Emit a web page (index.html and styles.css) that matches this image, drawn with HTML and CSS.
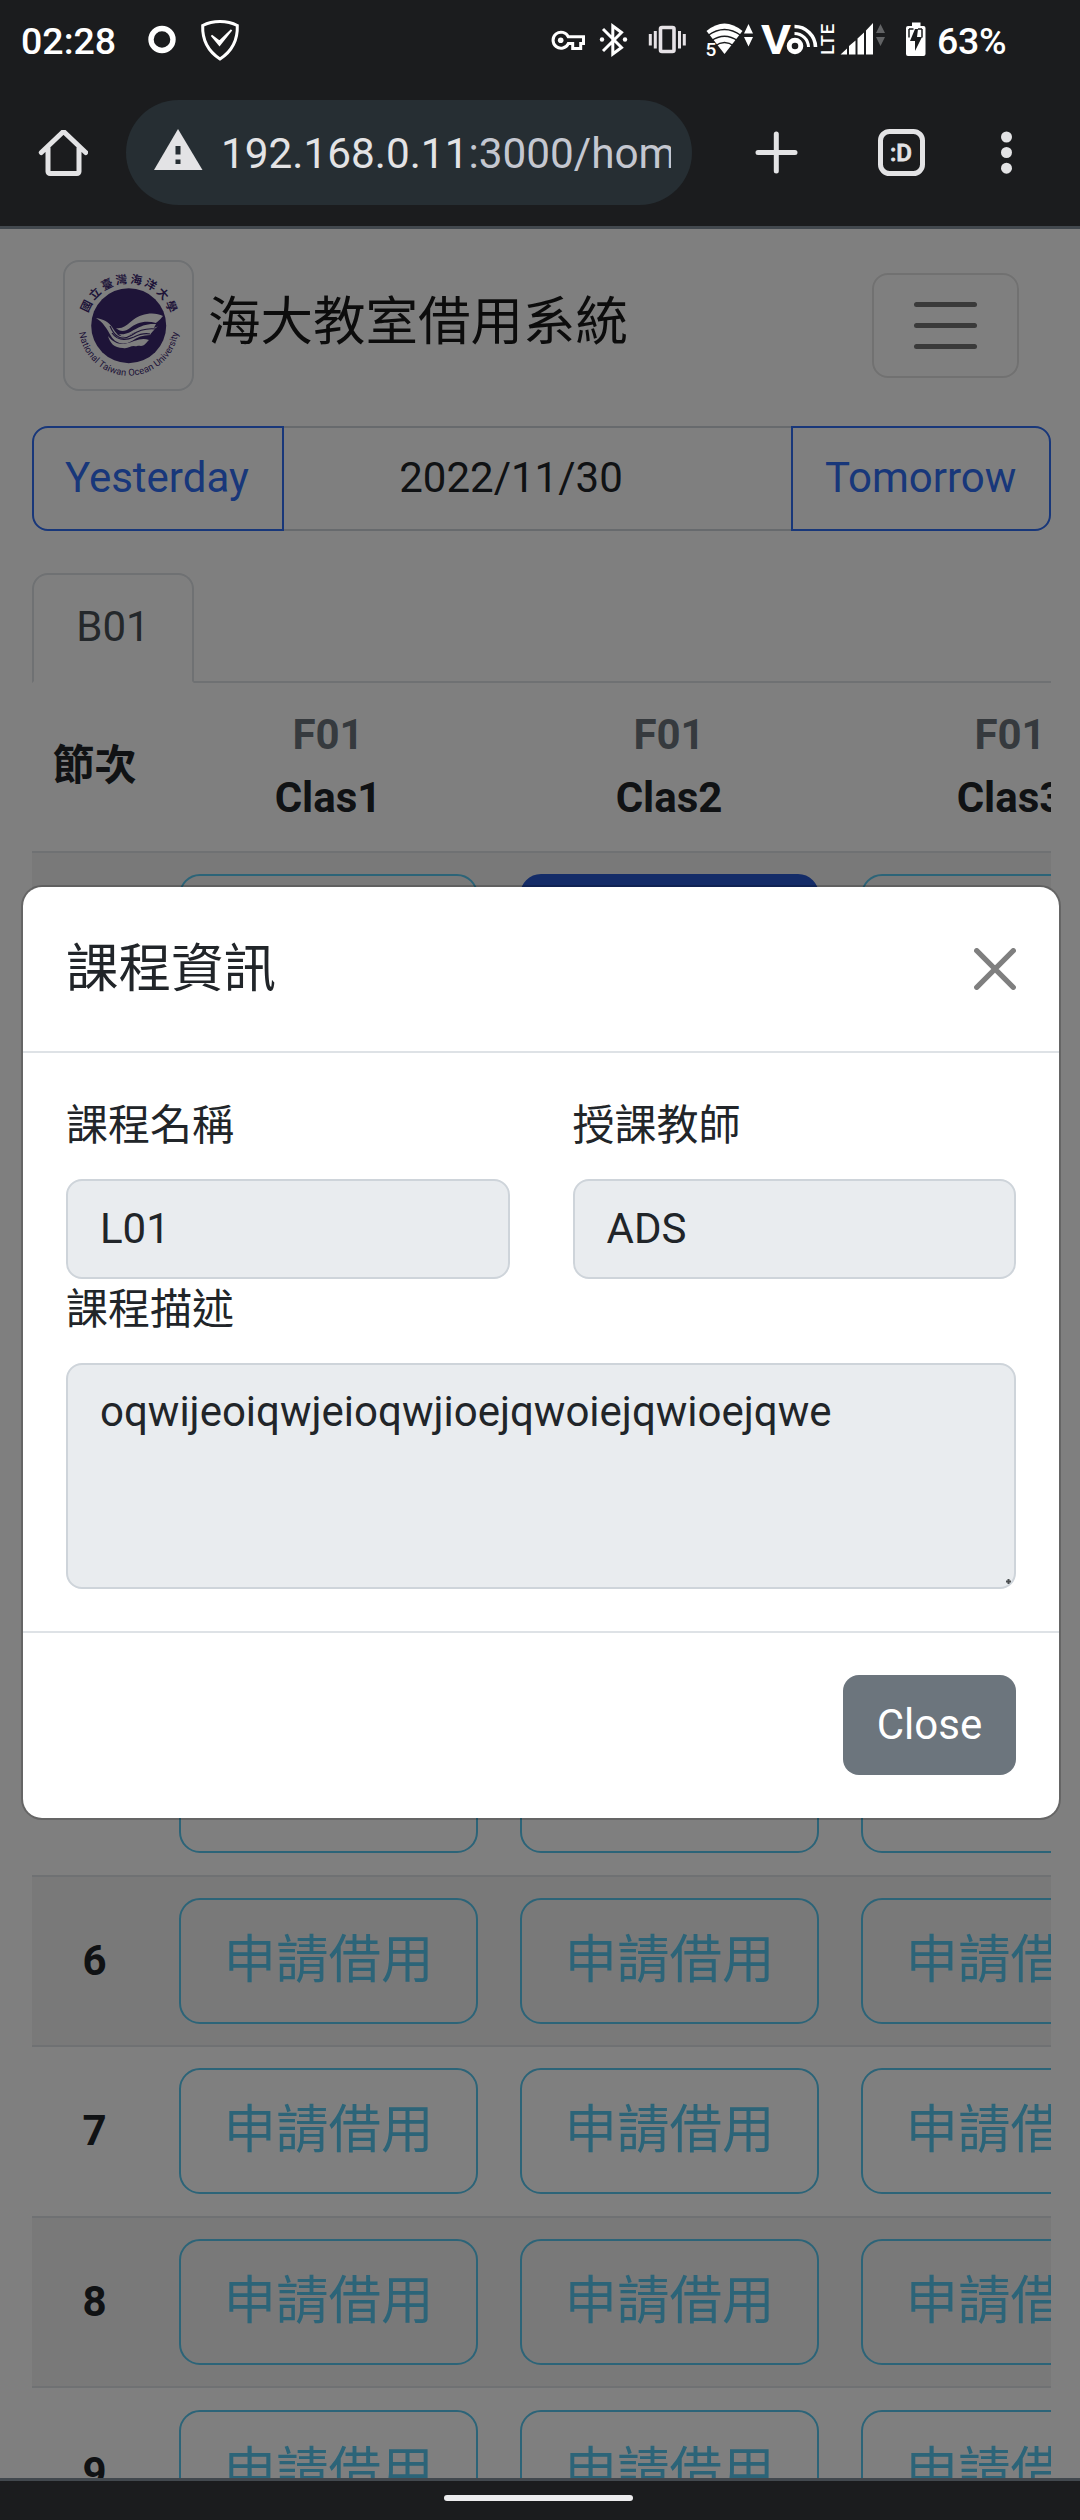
FILE: index.html
```html
<!DOCTYPE html>
<html lang="zh-Hant">
<head>
<meta charset="utf-8">
<title>海大教室借用系統</title>
<link rel="stylesheet" href="styles.css">
</head>
<body>
<div class="phone">
  <header class="chrome">
    <div class="status">
      <span class="clock">02:28</span>
      <svg class="status-left" width="100" height="60" viewBox="140 10 100 60" fill="none" stroke="#fff">
        <circle cx="162" cy="39.5" r="11" stroke-width="5.4"/>
        <path d="M220 21.5c6.500 0 12 1.200 17.300 4 0.500 14-5 25.500-17.300 33.500-12.300-8-17.800-19.500-17.300-33.500 5.300-2.800 10.800-4 17.300-4z" stroke-width="3"/>
        <path d="M211.500 35.500l8 9.500 12-15-12 11.500z" fill="#fff" stroke-width="1.800"/>
      </svg>
      <svg class="status-right" width="350" height="50" viewBox="545 15 350 50" fill="#fff">
        <g fill="none" stroke="#fff" stroke-width="3">
          <path d="M568.300 36.800h15.200v6.800h-2.800v5h-8v-5h-4.400a8 8 0 1 1 0-6.800z"/>
          <path d="M603 29l18.500 18.500-8.700 6.500v-28l8.700 6.500-18.500 18.500"/>
        </g>
        <circle cx="560.700" cy="40.200" r="2.800"/>
        <circle cx="602" cy="39.500" r="2.200"/><circle cx="625" cy="39.500" r="2.200"/>
        <rect x="660.500" y="27.500" width="13.500" height="24" rx="1.500" fill="none" stroke="#e6e2e6" stroke-width="3.600"/>
        <path d="M650.300 34v11.500M655.300 31v17.500M679.500 31v17.500M684.300 34v11.500" stroke="#e6e2e6" stroke-width="3"/>
        <path d="M706.500 31q18-15 36 0L724.500 54z"/>
        <g fill="none" stroke="#1b1c1e" stroke-width="1.500">
          <path d="M708 35.500q16.500-12 33 0M711 41q13.500-9.500 27 0M715 46q9.500-7 19 0"/>
        </g>
        <path d="M704 41h10l4 8v9h-14z" fill="#1b1c1e"/>
        <text x="705.500" y="55.500" font-size="19">5</text>
        <path d="M744 33.500l4.500-9.500 4.500 9.500zM744 37l4.500 9.500 4.500-9.500z"/>
        <text class="heavy" x="761" y="53.500" font-size="41" textLength="30" lengthAdjust="spacingAndGlyphs">V</text>
        <g fill="none" stroke="#fff">
          <circle cx="795" cy="46" r="5.800" stroke-width="5"/>
          <path d="M794.500 26.500a21 21 0 0 1 21 20.500" stroke-width="3.600"/>
          <path d="M794.500 33.500a14 14 0 0 1 14 13.500" stroke-width="3"/>
        </g>
        <text class="mid" transform="translate(833.500 54.800) rotate(-90)" font-size="18.500" textLength="31">LTE</text>
        <path d="M840.500 54.500l6.500-6v6zM849 54.500v-8.500l6.500-5.500v14zM857.500 54.500v-16l6.500-6v22zM866 54.500v-24l7-7.500v31.500z"/>
        <path d="M876 33l4.500-9 4.500 9zM876 37l4.500 9 4.500-9z" fill="#626365"/>
      </svg>
      <svg class="battery" width="24" height="50" viewBox="904 15 24 50">
        <path d="M912 22.500h8.500v3.500h3a2 2 0 0 1 2 2v26a2 2 0 0 1-2 2h-15.500a2 2 0 0 1-2-2V28a2 2 0 0 1 2-2h4z" fill="#fff"/>
        <path d="M909 29v8.500M922 29v8.500M909 29h4.500M918 29h4" stroke="#1b1c1e" stroke-width="1.500"/>
        <path d="M915 29l-5 12h5v10l7-14h-5l1-8z" fill="#1b1c1e"/>
      </svg>
      <span class="percent">63%</span>
    </div>
    <div class="toolbar">
      <svg class="home" width="50" height="52" viewBox="38 130 50 52" fill="none" stroke="#e3e3e5" stroke-width="5" stroke-linejoin="round" stroke-linecap="round">
        <path d="M41.300 152.500L63.500 131.500 85.700 152.500M48 148v23.500a2 2 0 0 0 2 2h27a2 2 0 0 0 2-2V148"/>
      </svg>
      <div class="omnibox">
        <svg class="warn" width="50" height="44" viewBox="153 128 50 44">
          <path d="M178 129l24.500 41h-48.500z" fill="#e3e3e5"/>
          <path d="M178 146v8.500M178 159.500v4.500" stroke="#262e33" stroke-width="5"/>
        </svg>
        <span class="url">192.168.0.11<span class="path">:3000/home</span></span>
      </div>
      <svg class="tools" width="270" height="60" viewBox="750 122 270 60" fill="none" stroke="#e3e3e5" stroke-linecap="round">
        <path d="M758 152.500h37M776.300 134v37" stroke-width="5"/>
        <rect x="880.500" y="131.500" width="42" height="42" rx="9" stroke-width="5"/>
        <text class="mid" x="890" y="161" font-size="24.500" fill="#e3e3e5" stroke="#e3e3e5" stroke-width=".8" textLength="22" lengthAdjust="spacingAndGlyphs">:D</text>
        <g fill="#e3e3e5" stroke="none"><circle cx="1006.500" cy="137" r="5.500"/><circle cx="1006.500" cy="152.500" r="5.500"/><circle cx="1006.500" cy="168.200" r="5.500"/></g>
      </svg>
    </div>
  </header>

  <main class="page">
    <nav class="navbar">
      <div class="logo">
        <svg width="127" height="127" viewBox="65 262 127 127">
          <defs>
            <path id="arc-top" d="M86.200 325.700a42.500 42.500 0 0 1 85 0"/>
            <path id="arc-bottom" d="M78.700 325.700a50 50 0 0 0 100 0"/>
          </defs>
          <circle cx="128.700" cy="325.700" r="37.500" fill="#3c2870"/>
          <text class="seal-cjk" font-size="11.500" letter-spacing="2.300" text-anchor="middle"><textPath href="#arc-top" startOffset="51%">國立臺灣海洋大學</textPath></text>
          <text class="seal-en" font-size="9.400" text-anchor="middle"><textPath href="#arc-bottom" startOffset="50%" textLength="143">National Taiwan Ocean University</textPath></text>
          <path fill="#fff" d="M96 318c7 1 13 4 16 9 2 3 4 6 6 8 9 5 17-5 27-6 5-1 9 0 13-3-4 4-7 7-8 9-7 0-13 2-18 6-9 5-17 2-21-5-4-7-8-14-15-18z"/>
          <path fill="#fff" d="M116 328c12 2 15-12 31-14 6-1 12 0 16 2-3 4-5 5-7 7-11-3-20 0-26 5-5 4-10 4-14 0z"/>
          <path fill="#fff" d="M119 334c13 2 17-11 37-10-3 5-4 8-7 9-10-4-16 0-21 3-4 2-7 0-9-2z"/>
          <path fill="#fff" d="M108 336c8 10 16 9 26 5 6-2 10-3 15-1-3 3-5 6-8 6-4-1-4 1-7 0-4 0-6 3-11 2-9 0-13-5-15-12z"/>
          <path fill="none" stroke="#3c2870" stroke-width="1.200" d="M110 326c5 12 12 15 22 9 7-5 15-7 24-6M112 333c5 7 13 8 22 4 6-3 11-4 16-3"/>
        </svg>
      </div>
      <span class="brand">海大教室借用系統</span>
      <div class="toggler"><i></i><i></i><i></i></div>
    </nav>

    <div class="date-group">
      <div class="btn-date first">Yesterday</div>
      <div class="date-field">2022/11/30</div>
      <div class="btn-date last">Tomorrow</div>
    </div>

    <div class="tabs"><div class="tab">B01</div></div>

    <div class="table">
      <div class="row head">
        <div class="cell">節次</div>
        <div class="cell"><span class="floor">F01</span><span>Clas1</span></div>
        <div class="cell"><span class="floor">F01</span><span>Clas2</span></div>
        <div class="cell"><span class="floor">F01</span><span>Clas3</span></div>
      </div>
      <div class="row"><div class="cell"></div><div class="book"></div><div class="book taken"></div><div class="book"></div></div>
      <div class="row"><div class="cell"></div><div class="book"></div><div class="book"></div><div class="book"></div></div>
      <div class="row"><div class="cell"></div><div class="book"></div><div class="book"></div><div class="book"></div></div>
      <div class="row"><div class="cell"></div><div class="book"></div><div class="book"></div><div class="book"></div></div>
      <div class="row"><div class="cell"></div><div class="book"></div><div class="book"></div><div class="book"></div></div>
      <div class="row"><div class="cell"></div><div class="book"></div><div class="book"></div><div class="book"></div></div>
      <div class="row"><div class="cell">6</div><div class="book">申請借用</div><div class="book">申請借用</div><div class="book">申請借用</div></div>
      <div class="row"><div class="cell">7</div><div class="book">申請借用</div><div class="book">申請借用</div><div class="book">申請借用</div></div>
      <div class="row"><div class="cell">8</div><div class="book">申請借用</div><div class="book">申請借用</div><div class="book">申請借用</div></div>
      <div class="row"><div class="cell">9</div><div class="book">申請借用</div><div class="book">申請借用</div><div class="book">申請借用</div></div>
    </div>

    <div class="backdrop">
      <section class="modal">
        <div class="modal-header">
          <h5>課程資訊</h5>
          <svg width="42" height="42" viewBox="0 0 42 42" stroke="#7f7f7f" stroke-width="5.200" stroke-linecap="round"><path d="M2.700 2.700l36.600 36.600M39.300 2.700L2.700 39.300"/></svg>
        </div>
        <div class="modal-body">
          <div class="fields">
            <div class="field"><label>課程名稱</label><div class="control">L01</div></div>
            <div class="field"><label>授課教師</label><div class="control">ADS</div></div>
          </div>
          <div class="field">
            <label>課程描述</label>
            <div class="control area">oqwijeoiqwjeioqwjioejqwoiejqwioejqwe<svg class="grip" width="5" height="5" viewBox="0 0 5 5"><path d="M0 1.500h1.500V0h2v1.500H5v2H3.500V5h-2V3.500H0z" fill="#4b4e51"/></svg></div>
          </div>
        </div>
        <div class="modal-footer"><div class="btn-close">Close</div></div>
      </section>
    </div>
  </main>

  <footer class="gesture"><i></i></footer>
</div>
</body>
</html>
```
FILE: styles.css
```css
* { box-sizing: border-box; }
body { margin: 0; font-family: Roboto, "Noto Sans CJK TC", sans-serif; font-size: 42px; color: #212529; }
svg { display: block; flex: none; }
svg text { font-family: Roboto, "Noto Sans CJK TC", sans-serif; }
.heavy { font-weight: 700; }
.mid { font-weight: 500; }

.phone { width: 1080px; height: 2520px; display: flex; flex-direction: column; overflow: hidden; background: #1b1c1e; }

/* Browser chrome */
.chrome { height: 229px; flex: none; border-bottom: 3px solid #42484e; }
.status { height: 80px; display: flex; align-items: flex-start; color: #fff; font-weight: 500; font-size: 37.500px; line-height: 45px; }
.clock { padding: 19px 0 0 21px; width: 140px; }
.status-left { margin-top: 10px; }
.status-right { margin: 15px 0 0 305px; }
.battery { margin: 15px 0 0 9px; }
.percent { padding: 19px 0 0 9px; letter-spacing: -.3px; }
.toolbar { display: flex; align-items: flex-start; padding-top: 20px; height: 125px; }
.home { margin: 30px 0 0 38px; }
.omnibox { display: flex; align-items: center; margin-left: 38px; width: 566px; height: 105px; border-radius: 53px; background: #262e33; padding-left: 27px; }
.warn { margin-top: -6px; }
.url { flex: none; width: 450px; margin: 3px 0 0 18px; overflow: hidden; white-space: nowrap; color: #e3e3e5; font-size: 42.300px; line-height: 60px; }
.path { color: #c4c7d0; }
.tools { margin: 22px 0 0 58px; }

/* Page */
.page { position: relative; flex: 1; overflow: hidden; background: #fff; padding: 31px 29px 0 32px; }
.navbar { display: flex; align-items: center; height: 131px; padding: 0 32px 0 31px; }
.logo { width: 131px; height: 131px; border: 2px solid #dee2e6; border-radius: 16px; }
.seal-cjk { fill: #3c2870; font-weight: 700; }
.seal-en { fill: #3c2870; }
.brand { font-size: 52.500px; line-height: 78px; margin: -8px auto 0 14px; color: #191919; white-space: nowrap; }
.toggler { width: 147px; height: 105px; border: 2px solid #e3e3e3; border-radius: 16px; display: flex; flex-direction: column; justify-content: center; align-items: center; gap: 16px; }
.toggler i { width: 63px; height: 5px; border-radius: 3px; background: #747474; }

.date-group { display: flex; height: 105px; margin-top: 35px; line-height: 63px; }
.btn-date { border: 2px solid #306ef4; color: #306ef4; padding: 18px 32px; }
.first { border-radius: 16px 0 0 16px; width: 252px; padding-left: 31px; }
.last { border-radius: 0 16px 16px 0; width: 260px; }
.date-field { flex: 1; border: solid #ced4da; border-width: 2px 0; padding: 18px 53px 18px 0; text-align: center; }

.tabs { margin-top: 42px; height: 110px; border-bottom: 2px solid #dee2e6; }
.tab { width: 162px; height: 110px; border: 2px solid #dee2e6; border-bottom-color: #fff; border-radius: 16px 16px 0 0; text-align: center; line-height: 103px; color: #495057; }

.table { overflow: hidden; }
.row { display: grid; grid-template-columns: 126px repeat(3, 341px); height: 170.600px; border-top: 2px solid #dee2e6; }
.row:nth-child(even) { background: #f2f2f2; }
.cell { display: flex; flex-direction: column; align-items: center; justify-content: center; font-weight: 700; line-height: 63px; padding: 0 1px 1px 0; }
.head { height: 168px; border-top: 0; }
.head .cell { padding-bottom: 4px; }
.head .cell + .cell { padding: 0 1px 2px 0; }
.floor { color: #6c757d; }
.book { width: 299px; height: 126px; margin: 21.300px 21px; border: 2px solid #58c8f0; border-radius: 21px; color: #58c8f0; font-size: 52.500px; line-height: 121px; text-align: center; }
.taken { background: #2858d0; border-color: #2858d0; color: #fff; }

/* Dialog, layered over the dimmed page */
.backdrop { position: absolute; inset: 0; background: rgba(0, 0, 0, .5); display: flex; justify-content: center; padding: 656px 19px 0 21px; }
.modal { width: 1040px; height: 935px; background: #fff; background-clip: padding-box; border: 2px solid rgba(0, 0, 0, .2); border-radius: 21px; display: flex; flex-direction: column; }
.modal-header { height: 166px; display: flex; justify-content: space-between; align-items: center; padding: 0 43px; border-bottom: 2px solid #dee2e6; }
h5 { margin: 0; font-weight: 400; font-size: 52.500px; line-height: 78px; }
.modal-body { flex: 1; padding: 42px 43px 0; }
.fields { display: grid; grid-template-columns: 1fr 1fr; gap: 63px; }
label { display: block; line-height: 61px; height: 84px; }
.control { height: 100px; border: 2px solid #ced4da; border-radius: 16px; background: #e9ecef; padding: 16px 32px; line-height: 63px; }
.area { position: relative; height: 226px; padding-top: 15px; }
.grip { position: absolute; right: 3px; bottom: 3px; }
.modal-footer { height: 187px; border-top: 2px solid #dee2e6; padding: 42px 43px; display: flex; justify-content: flex-end; }
.btn-close { width: 173px; height: 100px; border-radius: 16px; background: #6c757d; color: #fff; text-align: center; line-height: 100px; }

.gesture { height: 42px; flex: none; border-top: 3px solid #42484e; display: flex; justify-content: center; padding-top: 14px; }
.gesture i { width: 189px; height: 6px; border-radius: 3px; background: #ececee; margin-right: 3px; }
```
